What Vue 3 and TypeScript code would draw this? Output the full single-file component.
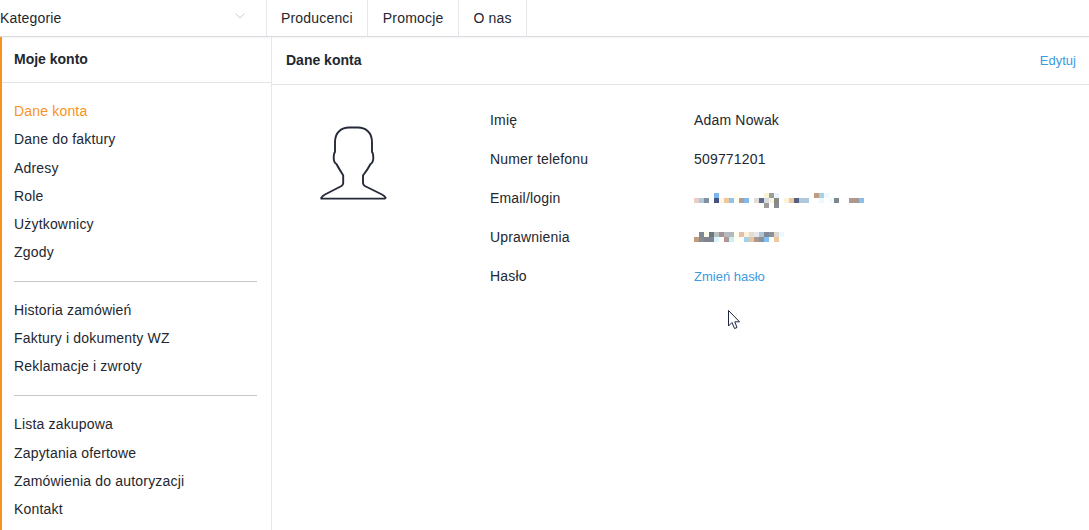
<script setup lang="ts">
const navItems = ['Producenci', 'Promocje', 'O nas']
const groups = [
  ['Dane konta', 'Dane do faktury', 'Adresy', 'Role', 'Użytkownicy', 'Zgody'],
  ['Historia zamówień', 'Faktury i dokumenty WZ', 'Reklamacje i zwroty'],
  ['Lista zakupowa', 'Zapytania ofertowe', 'Zamówienia do autoryzacji', 'Kontakt'],
]
const emailTop = ['', '', '', '', '#7db5ee', '', '', '', '#fffff0', '', '', '', '', '', '#f8f4d8', '#a09c98', '#e8f6fc', '', '', '', '', '', '', '', '#c09c80', '#a8d0e4', '#eefaff']
const emailBottom = ['#eccfc4', '#b0c8d8', '#8090a0', '', '#445680', '#fdf8e4', '#eec89c', '#8cc4f0', '#fffff0', '#b09c94', '#80b8f0', '', '#e4dcd8', '#606c8c', '#d8dce0', '#f8f4d8', '#888888', '', '#fcf4d8', '#ecc8a0', '#566080', '#b0c8dc', '#b0c8dc', '', '', '#e8faff', '', '#f4fbff', '#808890', '', '', '#b09890', '#a89890', '#88c0f0']
const emailThird = ['', '', '', '', '', '', '', '', '', '', '', '', '', '', '#a09c9c', '', '#888c90']
const roleTop = ['', '#808894', '#fdfce8', '#687880', '#b8c0c0', '#a09498', '#b8bcc0', '#b4b8b8', '#fffff0', '#e8bcac', '#fcf4d8', '#e4dcd4', '#e4e8ec', '#b0c4d4', '#808898', '#8c9098', '#e0d8d0', '#e8faff']
const roleBottom = ['#c09c80', '#888c90', '#808490', '#808490', '#dcf4fc', '', '#b09890', '#c8f0f8', '#fffff0', '', '#a8d0e4', '#e8c4a0', '#a89890', '#8c9098', '#80c0f4', '', '#ecc8a0']
const rows = [
  { label: 'Imię', value: 'Adam Nowak' },
  { label: 'Numer telefonu', value: '509771201' },
  { label: 'Email/login', pixels: [emailTop, emailBottom, emailThird] },
  { label: 'Uprawnienia', pixels: [roleTop, roleBottom] },
  { label: 'Hasło', link: 'Zmień hasło' },
]
</script>

<template>
  <div class="page">
    <header class="topbar">
      <div class="category">
        <span>Kategorie</span>
        <svg class="chevron" width="10" height="6" viewBox="0 0 10 6" fill="none">
          <path d="M.5.5 5 5 9.500.5" stroke="#b5d8c0" stroke-width="1" />
        </svg>
      </div>
      <a v-for="item in navItems" :key="item" class="nav-item">{{ item }}</a>
    </header>
    <div class="layout">
      <aside class="sidebar">
        <h2 class="side-title">Moje konto</h2>
        <nav class="side-nav">
          <ul v-for="(group, g) in groups" :key="g" class="side-group">
            <li v-for="item in group" :key="item" :class="{ active: item === 'Dane konta' }">{{ item }}</li>
          </ul>
        </nav>
      </aside>
      <main class="content">
        <div class="content-head">
          <h1>Dane konta</h1>
          <a class="link edit">Edytuj</a>
        </div>
        <div class="details">
          <div class="avatar">
            <svg width="70" height="76" viewBox="0 0 70 76" fill="none">
              <path d="M3 73.500C4 71.500 5 70.500 7 69.500L23.500 61C25 60 25.200 59.500 25.200 58V50.500C22.500 46 20 42 18.500 39C16.500 38 15.700 36 15.700 33C15.700 30.500 16 28 17 27V17C17 7 24 2.500 31 2.500H40C47 2.500 54 7 54 17V27C55 28 55.300 30.500 55.300 33C55.300 36 54.500 38 52.500 39C51 42 48.500 46 45 50.500V58C45 59.500 45.300 60 46.800 61L64 69.500C66 70.500 67 71.500 68 73.500" stroke="#252a38" stroke-width="1.900" stroke-linejoin="round" />
              <path d="M2.500 73.700H67.500" stroke="#252a38" stroke-width="1.800" />
            </svg>
          </div>
          <dl class="info">
            <div v-for="row in rows" :key="row.label" class="info-row">
              <dt>{{ row.label }}</dt>
              <dd>
                <a v-if="row.link" class="link small">{{ row.link }}</a>
                <span v-else-if="row.pixels" class="pixels">
                  <span v-for="(line, l) in row.pixels" :key="l" class="pixel-line">
                    <i v-for="(c, i) in line" :key="i" :style="{ background: c || 'transparent' }"></i>
                  </span>
                </span>
                <template v-else>{{ row.value }}</template>
              </dd>
            </div>
          </dl>
        </div>
      </main>
    </div>
    <svg class="cursor" width="14" height="22" viewBox="0 0 14 22">
      <path d="M1.500 1.500V17L5 13.500 7.500 19.500 10 18.500 7.800 12.800H12.500Z" fill="#fff" stroke="#1e2444" stroke-width="1" stroke-linejoin="round" />
    </svg>
  </div>
</template>

<style>
html, body { margin: 0; background: #fff; }
</style>

<style scoped>
.page {
  position: relative;
  width: 1089px;
  height: 530px;
  overflow: hidden;
  background: #fff;
  color: #23272f;
  font-family: "Liberation Sans", Arial, sans-serif;
  font-size: 14px;
}
.topbar {
  display: flex;
  height: 36px;
  border-bottom: 1px solid #d9dbe0;
  box-shadow: 0 1px 2px rgba(0, 0, 0, 0.05);
}
.category {
  width: 257.500px;
  padding-right: 8px;
  display: flex;
  align-items: center;
  justify-content: space-between;
  border-right: 1px solid #e6e7ea;
  letter-spacing: 0.18px;
}
.chevron { margin-right: 13px; margin-top: -4px; }
.nav-item {
  display: flex;
  align-items: center;
  padding: 0 14.500px;
  border-right: 1px solid #e6e7ea;
  letter-spacing: 0.18px;
}
.layout { display: flex; height: 493px; }
.sidebar {
  flex: none;
  box-sizing: border-box;
  width: 272px;
  border-left: 2px solid #f7931e;
  border-right: 1px solid #e6e7ea;
}
.side-title {
  margin: 0;
  height: 45px;
  line-height: 45px;
  padding-left: 12px;
  font-size: 14px;
  font-weight: 700;
  border-bottom: 1px solid #e3e4e9;
}
.side-nav { padding: 14.200px 14px 0 12px; }
.side-group {
  list-style: none;
  margin: 0 0 14px;
  padding: 0 0 14.600px;
  border-bottom: 1px solid #c8c8c8;
  letter-spacing: 0.18px;
}
.side-group:nth-child(2) { margin-bottom: 14.250px; }
.side-group:last-child { border-bottom: 0; }
.side-group li { height: 28.200px; line-height: 28.200px; }
.side-group li.active { color: #f7931e; }
.content { flex: 1; min-width: 0; }
.content-head {
  height: 47px;
  padding: 0 13px 0 14px;
  display: flex;
  align-items: center;
  justify-content: space-between;
  border-bottom: 1px solid #e3e4e9;
}
.content-head h1 { margin: -2px 0 0; font-size: 14px; font-weight: 700; }
.link { color: #3a9be0; }
.edit { font-size: 13px; }
.small { font-size: 13px; letter-spacing: 0; }
.details { display: flex; padding-top: 15px; }
.avatar { width: 218px; padding-left: 46px; padding-top: 25px; box-sizing: border-box; }
.avatar svg { display: block; }
.info { margin: 0; }
.info-row { display: flex; height: 39px; align-items: center; letter-spacing: 0.18px; }
.info-row dt { width: 204px; }
.info-row dd { margin: 0; }
.pixels { display: block; height: 10px; }
.pixel-line { display: flex; height: 5px; }
.pixel-line i { display: block; width: 5px; height: 5px; }
.cursor { position: absolute; left: 727px; top: 309px; }
</style>
